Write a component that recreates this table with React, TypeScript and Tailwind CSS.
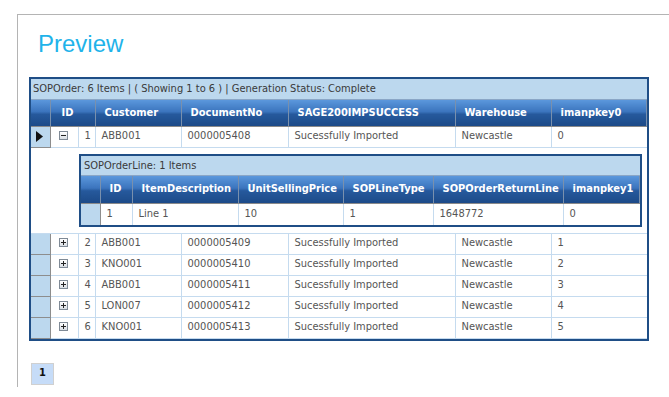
import React from "react"

const orders = [
  { id: 1, customer: "ABB001", doc: "0000005408", key: "0", open: true },
  { id: 2, customer: "ABB001", doc: "0000005409", key: "1" },
  { id: 3, customer: "KNO001", doc: "0000005410", key: "2" },
  { id: 4, customer: "ABB001", doc: "0000005411", key: "3" },
  { id: 5, customer: "LON007", doc: "0000005412", key: "4" },
  { id: 6, customer: "KNO001", doc: "0000005413", key: "5" },
]

const font = { fontFamily: '"DejaVu Sans Condensed", "DejaVu Sans", Tahoma, sans-serif' }

const headBg = "bg-[linear-gradient(#5b97dc,#3b74bd_45%,#26599c_55%,#1c4a88)]"
const th = "border-r border-[#7990ad] px-[9px] text-left text-[11px] font-bold text-white " + headBg
const td = "h-[21px] border-r border-b border-[#c5dbef] px-[6px] text-[11px] text-[#555] whitespace-nowrap"
const ind = "border-r border-b border-[#8d8d8d] bg-[#bcd8ee]"

const ExpandIcon = ({ open }: { open?: boolean }) => (
  <span className="inline-flex h-[9px] w-[9px] items-center justify-center border border-[#7f8a96] bg-[linear-gradient(#ffffff,#d8dde3)]">
    <svg width="7" height="7" viewBox="0 0 7 7">
      <rect x="1" y="3" width="5" height="1" fill="#222" />
      {!open && <rect x="3" y="1" width="1" height="5" fill="#222" />}
    </svg>
  </span>
)

const DetailTable = () => (
  <div className="w-[563px] border-2 border-[#1f4e86]">
    <div className="h-[20px] border-b border-[#8aa6c6] bg-[#bcd8ee] pl-[3px] text-[11px] leading-[19px] text-[#3a3a3a]">
      SOPOrderLine: 1 Items
    </div>
    <table className="w-full table-fixed border-collapse">
      <colgroup>
        <col className="w-[19px]" />
        <col className="w-[32px]" />
        <col className="w-[106px]" />
        <col className="w-[105px]" />
        <col className="w-[90px]" />
        <col className="w-[130px]" />
        <col />
      </colgroup>
      <thead>
        <tr>
          <th className={th + " h-[28px] border-b border-b-[#8a8a8a]"}></th>
          {["ID", "ItemDescription", "UnitSellingPrice", "SOPLineType", "SOPOrderReturnLine", "imanpkey1"].map((h) => (
            <th key={h} className={th + " h-[28px] border-b border-b-[#8a8a8a]"}>
              {h}
            </th>
          ))}
        </tr>
      </thead>
      <tbody>
        <tr>
          <td className={ind + " h-[20px] border-b-0"}></td>
          <td className={td + " h-[20px] border-b-0"}>1</td>
          <td className={td + " h-[20px] border-b-0"}>Line 1</td>
          <td className={td + " h-[20px] border-b-0"}>10</td>
          <td className={td + " h-[20px] border-b-0"}>1</td>
          <td className={td + " h-[20px] border-b-0"}>1648772</td>
          <td className={td + " h-[20px] border-b-0 border-r-0"}>0</td>
        </tr>
      </tbody>
    </table>
  </div>
)

export default function App() {
  return (
    <div className="h-[397px] w-[669px] overflow-hidden bg-white pl-[17px] pt-[14px]" style={font}>
      <div className="h-[373px] border-l border-t border-[#b4b4b4] pl-[11px]">
        <h1
          className="pl-[9px] pt-[13px] text-[24px] leading-[32px] text-[#1fb3ea]"
          style={{ fontFamily: '"Liberation Sans", Arial, sans-serif' }}
        >
          Preview
        </h1>
        <div className="mt-[17px] w-[620px] border-2 border-[#1f4e86]">
          <div className="h-[21px] border-b border-[#8aa6c6] bg-[#bcd8ee] pl-[2px] text-[11px] leading-[20px] text-[#3a3a3a]">
            SOPOrder: 6 Items | ( Showing 1 to 6 ) | Generation Status: Complete
          </div>
          <table className="w-full table-fixed border-collapse">
            <colgroup>
              <col className="w-[19px]" />
              <col className="w-[28px]" />
              <col className="w-[17px]" />
              <col className="w-[86px]" />
              <col className="w-[107px]" />
              <col className="w-[167px]" />
              <col className="w-[96px]" />
              <col />
            </colgroup>
            <thead>
              <tr>
                <th className={th + " h-[26px] border-b border-b-[#8a8a8a]"}></th>
                <th colSpan={2} className={th + " h-[26px] border-b border-b-[#8a8a8a] pl-[11px]"}>
                  ID
                </th>
                {["Customer", "DocumentNo", "SAGE200IMPSUCCESS", "Warehouse", "imanpkey0"].map((h) => (
                  <th key={h} className={th + " h-[26px] border-b border-b-[#8a8a8a]"}>
                    {h}
                  </th>
                ))}
              </tr>
            </thead>
            <tbody>
              {orders.map((o) => (
                <React.Fragment key={o.id}>
                  <tr>
                    <td className={ind}>
                      {o.open && (
                        <svg width="7" height="11" viewBox="0 0 7 11" className="ml-[5px]">
                          <path d="M0 0 L7 5.5 L0 11 Z" fill="#111" />
                        </svg>
                      )}
                    </td>
                    <td className={td + " pl-[8px]"}>
                      <ExpandIcon open={o.open} />
                    </td>
                    <td className={td + " px-[3px]"}>{o.id}</td>
                    <td className={td}>{o.customer}</td>
                    <td className={td}>{o.doc}</td>
                    <td className={td}>Sucessfully Imported</td>
                    <td className={td}>Newcastle</td>
                    <td className={td + " border-r-0"}>{o.key}</td>
                  </tr>
                  {o.open && (
                    <tr>
                      <td colSpan={2} className="border-b border-[#c5dbef]"></td>
                      <td colSpan={6} className="border-b border-[#c5dbef] pb-[6px] pl-[1px] pt-[6px]">
                        <DetailTable />
                      </td>
                    </tr>
                  )}
                </React.Fragment>
              ))}
            </tbody>
          </table>
        </div>
        <div className="mt-[22px] ml-[2px] flex h-[22px] w-[23px] items-center justify-center border border-[#d0d0d0] bg-[#c6dcf8] text-[11px] font-bold text-[#111]">
          1
        </div>
      </div>
    </div>
  )
}
